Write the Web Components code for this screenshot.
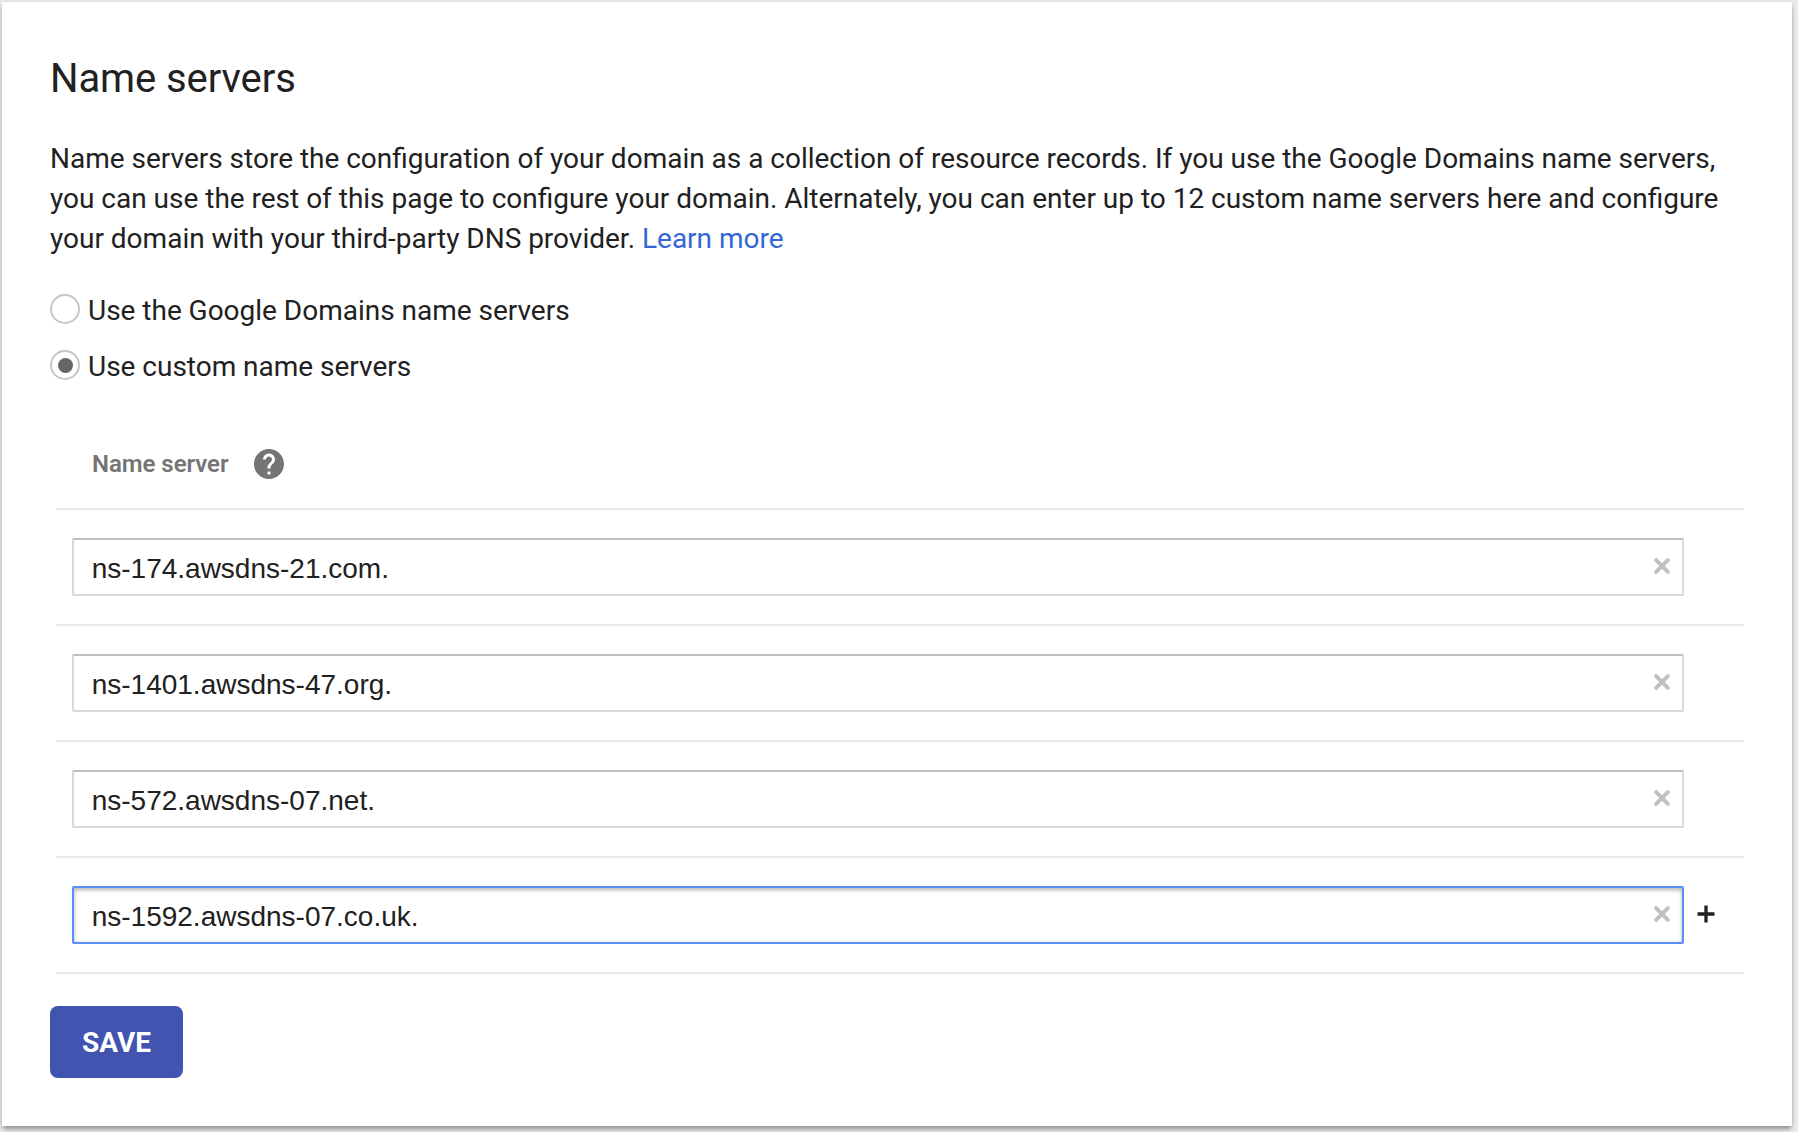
<!DOCTYPE html>
<html lang="en">
<head>
<meta charset="utf-8">
<title>Name servers</title>
<style>
  html, body { margin: 0; height: 100%; }
  body { background: #ebebeb; color: #212121; font: 28px/40px Roboto, "Liberation Sans", sans-serif; overflow: hidden; box-sizing: border-box; padding: 2px 6px 6px 2px; }
</style>
</head>
<body>
<settings-card>
  <span slot="title">Name servers</span>
  <name-server-settings></name-server-settings>
</settings-card>
<script>
function define(name, html) {
  const template = document.createElement('template');
  template.innerHTML = html;
  customElements.define(name, class extends HTMLElement {
    constructor() {
      super();
      this.attachShadow({ mode: 'open' }).append(template.content.cloneNode(true));
    }
  });
}

define('settings-card', `
<style>
  :host { display: block; box-sizing: border-box; height: 100%; background: #fff; padding: 57px 48px 0;
    box-shadow: 0 4px 5px -1px rgba(0,0,0,.38), 0 0 4px rgba(0,0,0,.1); }
  h1 { margin: 0 0 40px; font-size: 40px; line-height: 40px; font-weight: 400; letter-spacing: -.09px; }
</style>
<h1><slot name="title"></slot></h1>
<slot></slot>`);

define('radio-option', `
<style>
  :host { display: flex; align-items: center; height: 56px; gap: 8px; word-spacing: -.1px; }
  i { box-sizing: border-box; width: 30px; height: 30px; border: 2px solid #c6c6c6; border-radius: 50%;
    display: flex; align-items: center; justify-content: center; margin-top: -4px; }
  :host([checked]) i::after { content: ""; width: 15px; height: 15px; border-radius: 50%; background: #666; }
</style>
<i></i><span><slot></slot></span>`);

define('help-icon', `
<style>:host, svg { display: block; width: 36px; height: 36px; }</style>
<svg viewBox="0 0 24 24" fill="#757575"><path d="M12 2C6.48 2 2 6.48 2 12s4.48 10 10 10 10-4.48 10-10S17.52 2 12 2zm1 17h-2v-2h2v2zm2.07-7.75l-.9.92C13.45 12.9 13 13.5 13 15h-2v-.5c0-1.1.45-2.1 1.17-2.83l1.24-1.26c.37-.36.59-.86.59-1.41 0-1.1-.9-2-2-2s-2 .9-2 2H8c0-2.210 1.790-4 4-4s4 1.790 4 4c0 .88-.36 1.680-.93 2.250z"/></svg>`);

define('server-row', `
<style>
  :host { display: flex; align-items: center; box-sizing: border-box; height: 116px; padding: 0 16px; border-bottom: 2px solid #ebebeb; }
  .field { box-sizing: border-box; display: flex; align-items: center; justify-content: space-between; flex: none;
    width: 1612px; height: 58px; border: 2px solid #d9d9d9; border-top-color: #c0c0c0; border-radius: 2px;
    padding: 0 12px 0 17.700px; font-family: "Liberation Sans", Arial, sans-serif; }
  .value { padding-top: 4px; }
  .clear { display: block; width: 16px; height: 16px; margin-bottom: 3px; }
  .add { display: none; flex: none; width: 18px; height: 18px; margin: 0 0 3px 13px; }
  :host([active]) .field { border-color: #5a8ff5; box-shadow: inset 0 2px 4px rgba(0,0,0,.3); }
  :host([active]) .add { display: block; }
</style>
<div class="field"><span class="value"><slot></slot></span>
<svg class="clear" viewBox="0 0 16 16"><path d="M2.200 2.200L13.800 13.800M13.800 2.200L2.200 13.800" stroke="#c1c1c1" stroke-width="4" stroke-linecap="round"/></svg></div>
<svg class="add" viewBox="0 0 18 18"><path d="M9 .5V17.500M.5 9H17.500" stroke="#212121" stroke-width="3.300"/></svg>`);

define('save-button', `
<style>
  :host { display: flex; align-items: center; justify-content: center; box-sizing: border-box; width: 133px; height: 72px;
    padding-top: 2px; border-radius: 8px; background: #4154af; color: #fff; font-weight: 700; }
</style>
<slot></slot>`);

define('name-server-settings', `
<style>
  :host { display: block; }
  p { margin: 0 0 24px; white-space: nowrap; word-spacing: -.05px; }
  a { color: #3367d6; text-decoration: none; }
  .options { display: flex; flex-direction: column; }
  header { display: flex; align-items: center; gap: 22px; height: 88px; margin: 25px 0 0 6px; padding-left: 36px;
    border-bottom: 2px solid #ebebeb; color: #757575; font-size: 24px; font-weight: 600; letter-spacing: -.05px; }
  .rows { display: flex; flex-direction: column; margin: 0 0 32px 6px; }
</style>
<p>Name servers store the configuration of your domain as a collection of resource records. If you use the Google Domains name servers,<br>you can use the rest of this page to configure your domain. Alternately, you can enter up to 12 custom name servers here and configure<br>your domain with your third-party DNS provider. <a href="#">Learn more</a></p>
<div class="options">
  <radio-option>Use the Google Domains name servers</radio-option>
  <radio-option checked>Use custom name servers</radio-option>
</div>
<header><span>Name server</span><help-icon></help-icon></header>
<div class="rows">
  <server-row>ns-174.awsdns-21.com.</server-row>
  <server-row>ns-1401.awsdns-47.org.</server-row>
  <server-row>ns-572.awsdns-07.net.</server-row>
  <server-row active>ns-1592.awsdns-07.co.uk.</server-row>
</div>
<save-button>SAVE</save-button>`);
</script>
</body>
</html>
